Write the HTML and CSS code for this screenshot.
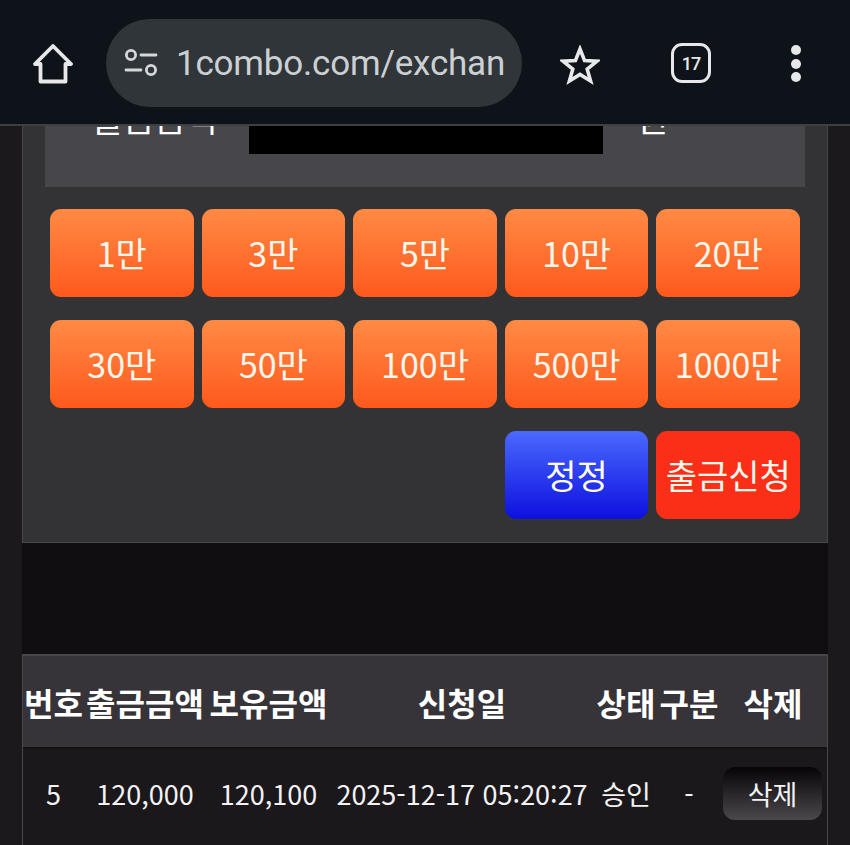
FILE: index.html
```html
<!DOCTYPE html>
<html lang="ko">
<head>
<meta charset="utf-8">
<title>출금신청</title>
<link rel="stylesheet" href="styles.css">
</head>
<body>
<header class="topbar">
  <svg class="icon-home" viewBox="0 0 40 40" width="40" height="40" fill="none" stroke="#e6e8ea" stroke-width="3.8" stroke-linejoin="round"><path d="M20 2 L38 20 H32.5 V37.5 H7.5 V20 H2 Z"/></svg>
  <div class="url-pill">
    <svg class="icon-tune" viewBox="0 0 34 28" width="34" height="28" fill="none" stroke="#d4d8da" stroke-width="2.8" stroke-linecap="round"><circle cx="7" cy="6" r="4.6"/><path d="M17 6 H32"/><path d="M2 21 H17"/><circle cx="27" cy="21" r="4.6"/></svg>
    <span class="url-text">1combo.com/exchan</span>
  </div>
  <svg class="icon-star" viewBox="0 0 40 40" width="40" height="40" fill="none" stroke="#e6e8ea" stroke-width="3.6" stroke-linejoin="miter"><path d="M20 4 L24.6 15.6 L37 16.2 L27.2 24.2 L30.6 36 L20 29.4 L9.4 36 L12.8 24.2 L3 16.2 L15.4 15.6 Z"/></svg>
  <div class="tab-count">17</div>
  <div class="dots"><span class="dot"></span><span class="dot"></span><span class="dot"></span></div>
</header>

<main class="page">
  <section class="panel">
    <div class="form-box">
      <span class="form-label">출금금액</span>
      <div class="amount-input"></div>
      <span class="form-unit">원</span>
    </div>
    <div class="btn-grid">
      <button class="btn orange">1만</button>
      <button class="btn orange">3만</button>
      <button class="btn orange">5만</button>
      <button class="btn orange">10만</button>
      <button class="btn orange">20만</button>
      <button class="btn orange">30만</button>
      <button class="btn orange">50만</button>
      <button class="btn orange">100만</button>
      <button class="btn orange">500만</button>
      <button class="btn orange">1000만</button>
      <button class="btn blue col-four">정정</button>
      <button class="btn red">출금신청</button>
    </div>
  </section>

  <div class="gap"></div>

  <table class="history">
    <colgroup>
      <col class="c-no"><col class="c-out"><col class="c-have"><col class="c-date"><col class="c-state"><col class="c-type"><col class="c-del">
    </colgroup>
    <thead>
      <tr><th>번호</th><th>출금금액</th><th>보유금액</th><th>신청일</th><th>상태</th><th>구분</th><th>삭제</th></tr>
    </thead>
    <tbody>
      <tr>
        <td>5</td><td>120,000</td><td>120,100</td><td>2025-12-17 05:20:27</td><td>승인</td><td>-</td>
        <td><button class="del-btn">삭제</button></td>
      </tr>
    </tbody>
  </table>
</main>
</body>
</html>
```
FILE: styles.css
```css
* { box-sizing: border-box; }
html, body { margin: 0; height: 845px; overflow: hidden; }
body {
  display: flex;
  flex-direction: column;
  background: #1b191b;
  color: #fff;
  font-family: "Noto Sans CJK KR", "Noto Sans", sans-serif;
}

/* browser bar */
.topbar {
  position: relative;
  z-index: 2;
  flex: none;
  height: 126px;
  padding: 19px 34px 17px 33px;
  display: flex;
  align-items: flex-start;
  background: #0e131a;
  border-bottom: 2px solid #3d4042;
}
.icon-home { margin-top: 25px; flex: none; }
.url-pill {
  margin-left: 33px;
  width: 416px;
  height: 88px;
  flex: none;
  display: flex;
  align-items: center;
  gap: 18px;
  padding-left: 18px;
  border-radius: 44px;
  background: #2f3539;
}
.icon-tune { flex: none; }
.url-text {
  font-family: Roboto, "Noto Sans", sans-serif;
  font-size: 35px;
  color: #ccd0d2;
  white-space: nowrap;
  letter-spacing: -0.2px;
}
.icon-star { margin: 26px 0 0 38px; flex: none; }
.tab-count {
  margin: 24px 0 0 71px;
  width: 40px;
  height: 40px;
  flex: none;
  display: flex;
  align-items: center;
  justify-content: center;
  border: 3.5px solid #e6e8ea;
  border-radius: 11px;
  font-family: Roboto, sans-serif;
  font-size: 18px;
  font-weight: 500;
  letter-spacing: -1px;
  color: #e6e8ea;
}
.dots {
  margin: 26px 0 0 80px;
  display: flex;
  flex-direction: column;
  gap: 3.5px;
}
.dot { width: 10px; height: 10px; border-radius: 50%; background: #e6e8ea; }

/* page */
.page {
  flex: 1;
  min-height: 0;
  overflow: hidden;
  padding: 0 22px;
}
.panel {
  margin-top: -44px;
  padding: 0 22px 23px;
  background: #333234;
  border: 1px solid #47474a;
  border-top: 0;
}
.form-box {
  height: 105px;
  display: flex;
  align-items: flex-start;
  background: #47464a;
}
.form-label, .form-unit {
  font-size: 34px;
  line-height: 72px;
}
.form-label { margin-left: 47px; width: 125px; white-space: nowrap; }
.amount-input {
  margin-left: 32px;
  width: 354px;
  height: 72px;
  background: #000;
}
.form-unit { margin-left: 34px; }

.btn-grid {
  margin: 22px 5px 0;
  display: grid;
  grid-template-columns: repeat(5, 1fr);
  grid-auto-rows: 88px;
  column-gap: 8px;
  row-gap: 23px;
}
.btn {
  padding: 0 0 1px;
  border: 0;
  border-radius: 11px;
  font-family: inherit;
  font-size: 34px;
  color: #fff6ec;
  white-space: nowrap;
}
.orange { background: linear-gradient(#ff8a44, #ff591d); }
.blue { background: linear-gradient(#4a69ff, #0d10de); color: #fff; }
.red { background: #fb2f17; }
.col-four { grid-column-start: 4; }

.gap { height: 111px; background: #110e11; }

/* history table */
.history {
  width: 806px;
  table-layout: fixed;
  border-collapse: separate;
  border-spacing: 0;
  background: #1b181b;
  border-left: 1px solid #47474a;
  border-right: 1px solid #47474a;
}
.c-no { width: 61px; }
.c-out { width: 122px; }
.c-have { width: 125px; }
.c-date { width: 262px; }
.c-state { width: 66px; }
.c-type { width: 60px; }
.c-del { width: 108px; }
.history th {
  height: 95px;
  padding: 0;
  background: #363438;
  border-top: 2px solid #47474a;
  border-bottom: 2px solid #141114;
  font-size: 32px;
  font-weight: 700;
  white-space: nowrap;
}
.history td {
  height: 120px;
  padding: 18px 0 0;
  vertical-align: top;
  text-align: center;
  font-size: 27px;
  line-height: 54px;
  white-space: nowrap;
  color: #f4f2f4;
}
.del-btn {
  display: block;
  width: 99px;
  height: 53px;
  margin-left: 4px;
  padding: 0;
  border: 0;
  border-radius: 12px;
  background: linear-gradient(#060406, #4a484c);
  font-family: inherit;
  font-size: 27px;
  color: #f4f2f4;
}
```
